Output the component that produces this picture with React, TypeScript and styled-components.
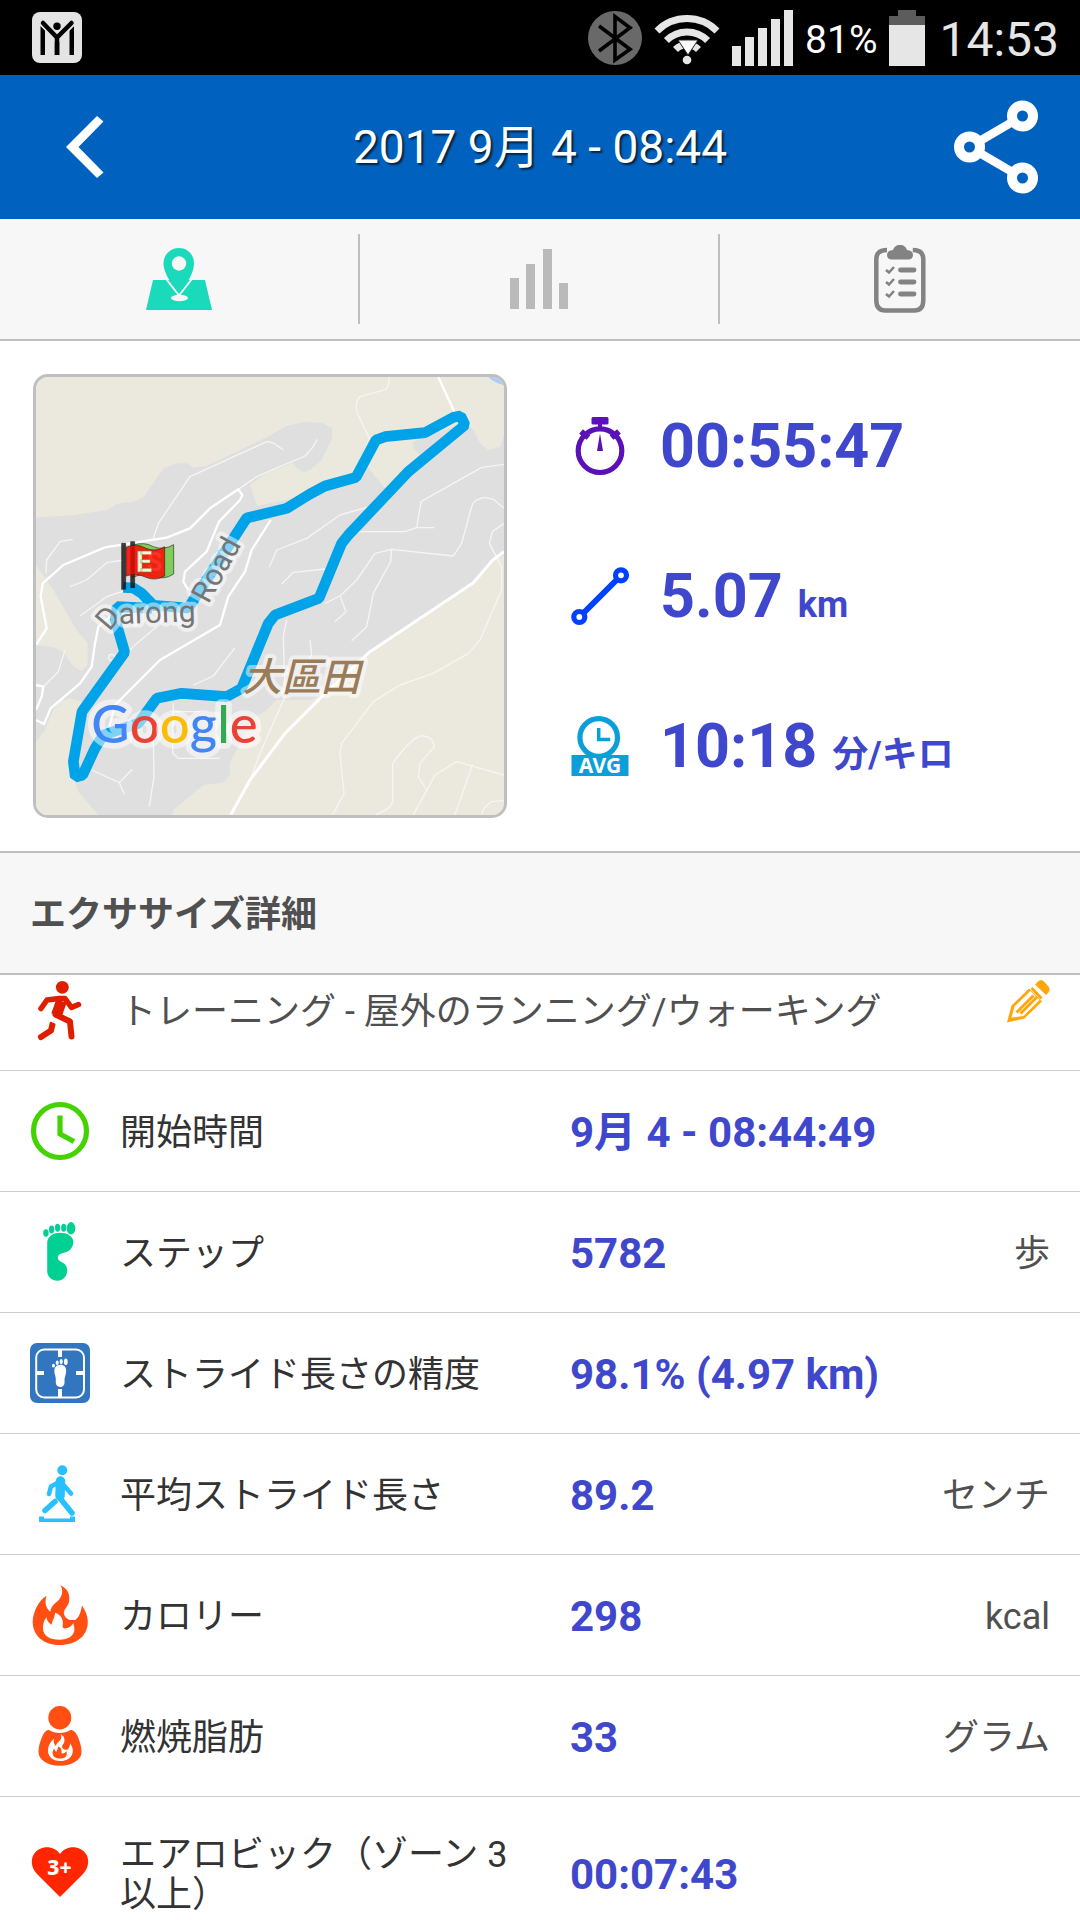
import React, { useLayoutEffect, useRef, useState } from "react";
import styled, { createGlobalStyle } from "styled-components";

const colors = {
  brand: "#0062be",
  bar: "#f7f7f7",
  line: "#bfbfbf",
  rowLine: "#cccccc",
  value: "#3f48cc",
  label: "#333333",
  muted: "#505050",
};

const GlobalStyle = createGlobalStyle`
  * { box-sizing: border-box; }
  body {
    margin: 0;
    background: #fff;
    font-family: Roboto, "Noto Sans CJK JP", sans-serif;
  }
  button {
    appearance: none;
    border: 0;
    padding: 0;
    background: none;
    font: inherit;
    color: inherit;
    cursor: pointer;
  }
  svg { display: block; }
`;

const Screen = styled.div`
  display: flex;
  flex-direction: column;
  height: 100vh;
  overflow: hidden;
`;

const StatusBar = styled.div`
  display: flex;
  align-items: center;
  justify-content: space-between;
  flex: none;
  height: 75px;
  padding: 0 21px 0 32px;
  background: #000;
`;

const StatusGroup = styled.div`
  display: flex;
  align-items: center;
  gap: 12px;
`;

const BatteryText = styled.span`
  padding-top: 4px;
  font-size: 39px;
  line-height: 48px;
  color: #fff;
`;

const Clock = styled.time`
  padding-top: 4px;
  font-size: 48px;
  line-height: 60px;
  color: #e6e6e6;
`;

const Header = styled.header`
  display: grid;
  grid-template-columns: 1fr auto 1fr;
  align-items: center;
  flex: none;
  height: 144px;
  padding: 0 42px 0 66px;
  background: ${colors.brand};
`;

const Title = styled.h1`
  margin: 0 0 0 -24px;
  font-size: 46px;
  line-height: 60px;
  font-weight: 400;
  color: #fff;
  text-shadow: 2px 2px 2px rgba(0, 0, 0, 0.65);
`;

const HeaderButton = styled.button<{ $end?: boolean }>`
  justify-self: ${(p) => (p.$end ? "end" : "start")};
`;

const Tabs = styled.nav`
  display: grid;
  grid-template-columns: repeat(3, 1fr);
  flex: none;
  padding: 15px 0;
  background: ${colors.bar};
  border-bottom: 2px solid ${colors.line};
`;

const Tab = styled.button`
  display: flex;
  align-items: center;
  justify-content: center;
  height: 90px;

  &:not(:last-child) {
    border-right: 2px solid ${colors.line};
  }
`;

const Summary = styled.section`
  display: grid;
  grid-template-columns: 474fr 477fr;
  gap: 63px;
  align-items: center;
  flex: none;
  padding: 33px;
`;

const MapFrame = styled.div`
  border: 3px solid ${colors.line};
  border-radius: 15px;
  overflow: hidden;
  background: #ebe9dd;

  svg {
    width: 100%;
    height: auto;
  }
`;

const Metrics = styled.div`
  display: flex;
  flex-direction: column;
  gap: 90px;
`;

const Metric = styled.div`
  display: flex;
  align-items: center;
  gap: 30px;
  height: 60px;
  font-weight: 700;
  color: ${colors.value};
  white-space: nowrap;
`;

const MetricText = styled.p`
  margin: 0;
  font-size: 61px;
  line-height: 60px;
`;

const MetricUnit = styled.span`
  font-size: 36px;
  line-height: 1px;
`;

const SectionTitle = styled.h2`
  flex: none;
  margin: 0;
  padding: 38px 30px 34px;
  font-size: 36px;
  line-height: 48px;
  font-weight: 700;
  color: ${colors.muted};
  background: ${colors.bar};
  border-top: 2px solid ${colors.line};
  border-bottom: 2px solid ${colors.line};
`;

const Details = styled.div`
  flex: 1;
  min-height: 0;
  overflow-y: auto;
  scrollbar-width: none;
`;

const List = styled.dl`
  margin: 0;
`;

const Activity = styled.div`
  display: flex;
  align-items: center;
  gap: 30px;
  height: 121px;
  padding: 0 30px;
  border-bottom: 1px solid ${colors.rowLine};
  font-size: 36px;
  line-height: 40px;
  color: ${colors.muted};
`;

const ActivityName = styled.span`
  flex: 1;
  padding-top: 4px;
`;

const EditButton = styled.button`
  align-self: flex-start;
  padding: 30px 0;
`;

const Row = styled.div`
  display: grid;
  grid-template-columns: 60px minmax(0, 7fr) minmax(0, 8fr);
  column-gap: 30px;
  align-items: center;
  min-height: 121px;
  padding: 34px 30px;
  border-bottom: 1px solid ${colors.rowLine};
  line-height: 40px;
`;

const IconSlot = styled.div`
  height: 48px;
  display: flex;
  align-items: center;
`;

const Label = styled.dt`
  padding-top: 4px;
  font-size: 36px;
  color: ${colors.label};
`;

const Reading = styled.dd`
  display: flex;
  align-items: center;
  justify-content: space-between;
  margin: 0;
  padding-top: 4px;
`;

const Value = styled.span`
  font-size: 42px;
  font-weight: 700;
  color: ${colors.value};
`;

const Unit = styled.span`
  font-size: 36px;
  color: ${colors.muted};
`;

const Icon = ({ children }: { children: React.ReactNode }) => (
  <svg width="60" height="60" viewBox="0 0 60 60" fill="none" overflow="visible" aria-hidden="true">
    {children}
  </svg>
);

const AppBadge = () => (
  <svg width="50" height="51" viewBox="0 0 50 51" aria-hidden="true">
    <rect width="50" height="51" rx="8" fill="#e4e4e4" />
    <path d="M8.500 14l4.500 4.500V43H8.500zM42 14l-4.500 4.500V43H42z" fill="#000" />
    <path d="M25 43V25M11 11l14 14.500L39.500 11" fill="none" stroke="#000" strokeWidth="4.500" strokeLinecap="round" />
    <path d="M22.800 30h4.500v13h-4.500z" fill="#000" />
    <circle cx="25" cy="14.300" r="3.700" fill="#000" />
    <path d="M8 13l9.500 9.500M42.500 13l-9.500 9.500" stroke="#e4e4e4" strokeWidth="1" />
    <path d="M22.800 43h4.500v4h-4.500z" fill="#e4e4e4" />
  </svg>
);

const Bluetooth = () => (
  <svg width="54" height="54" viewBox="0 0 54 54" aria-hidden="true">
    <circle cx="27" cy="27" r="27" fill="#696969" />
    <path d="M11 15l31 23.300L27 49V5.500l15 11.200L11 40" fill="none" stroke="#000" strokeWidth="3.600" />
  </svg>
);

const Wifi = () => (
  <svg width="66" height="54" viewBox="0 0 66 54" aria-hidden="true">
    <g fill="none" stroke="#e6e6e6" strokeWidth="7">
      <path d="M3 20a42.500 42.500 0 0 1 60 0" />
      <path d="M12.400 29.500a29 29 0 0 1 41.200 0" />
      <path d="M21.500 38.500a16.200 16.200 0 0 1 23 0" />
    </g>
    <path d="M24 29h20L34 44z" fill="#fff" stroke="#222" strokeWidth="1" />
    <circle cx="33" cy="49" r="4.300" fill="#e6e6e6" />
  </svg>
);

const Signal = () => (
  <svg width="61" height="56" viewBox="0 0 61 56" fill="#e6e6e6" aria-hidden="true">
    <path d="M0 36h9v20H0zM13 27h9v29h-9zM26 18h9v38h-9zM39 9h9v47h-9zM52 0h9v56h-9z" />
  </svg>
);

const Battery = () => (
  <svg width="38" height="56" viewBox="0 0 38 56" aria-hidden="true">
    <path d="M9 0h18v6h9v9H0V6h9z" fill="#5c5c5c" />
    <path d="M0 15h36v41H0z" fill="#e6e6e6" />
  </svg>
);

const BackArrow = () => (
  <svg width="38" height="62" viewBox="0 0 38 62" aria-hidden="true">
    <path d="M31 0l6.500 5.500L12.500 31l25 25.500L31 62 0 31z" fill="#fff" />
  </svg>
);

const Share = () => (
  <svg width="84" height="94" viewBox="0 0 84 94" fill="none" stroke="#fff" strokeWidth="10" aria-hidden="true">
    <path d="M15.500 47l53-31M15.500 47l53 31" strokeWidth="8.500" />
    <g fill={colors.brand}>
      <circle cx="68.500" cy="16" r="10.500" />
      <circle cx="15.500" cy="47" r="10.500" />
      <circle cx="68.500" cy="78" r="10.500" />
    </g>
  </svg>
);

const MapTabIcon = () => (
  <svg width="66" height="62" viewBox="0 0 66 62" aria-hidden="true">
    <path d="M7 32h52l7 30H0z" fill="#1adabb" />
    <ellipse cx="33.500" cy="50" rx="8.500" ry="3.300" fill={colors.bar} />
    <path
      d="M33 0C24 0 17.500 7 17.500 15.500 17.500 25 26 37 33 46c7-9 15-21 15-30.500C48 7 42 0 33 0z"
      fill="#1adabb"
    />
    <path d="M20.500 31.500l12.500 16 12.500-16" fill="none" stroke={colors.bar} strokeWidth="2" />
    <circle cx="33" cy="15.500" r="7.200" fill={colors.bar} />
  </svg>
);

const ChartTabIcon = () => (
  <svg width="58" height="60" viewBox="0 0 58 60" fill="#bababa" aria-hidden="true">
    <path d="M0 29h9v31H0zM16 15h9v45h-9zM33 0h9v60h-9zM49 34h9v26h-9z" />
  </svg>
);

const ClipboardTabIcon = () => (
  <svg width="52" height="68" viewBox="0 0 52 68" fill="none" stroke="#838383" aria-hidden="true">
    <path
      d="M13 5C6 5 2.300 8 2.300 14v41c0 7 3 10.500 9 10.500h29c6 0 9-3.500 9-10.500V14c0-6-3.500-9-10.500-9"
      strokeWidth="4.500"
    />
    <path
      d="M13 10c0-3 2-4.500 6-5 1-3 3-5 7-5s6 2 7 5c4 .5 6 2 6 5s-2 4.500-5 4.500H18c-3 0-5-1.500-5-4.500z"
      fill="#838383"
      stroke="none"
    />
    <path d="M26.500 25H40M26.500 37H40M26.500 49H40" strokeWidth="4.800" strokeLinecap="round" />
    <path d="M12 25l3 2.500 5-5.500M12 37l3 2.500 5-5.500M12 49l3 2.500 5-5.500" strokeWidth="2.600" />
  </svg>
);

const Stopwatch = () => (
  <Icon>
    <circle cx="30" cy="34.700" r="21.800" stroke="#5a12b8" strokeWidth="5.200" />
    <path d="M11 15.500l7.500 6M49 15.500l-7.500 6" stroke="#5a12b8" strokeWidth="6" />
    <path d="M23 1h14a1.500 1.500 0 0 1 1.500 1.500V7A1.500 1.500 0 0 1 37 8.500h-5V12h-4V8.500h-5A1.500 1.500 0 0 1 21.500 7V2.500A1.500 1.500 0 0 1 23 1z" fill="#5a12b8" />
    <path d="M30 17.500l3 17.500h-6z" fill="#5a12b8" />
  </Icon>
);

const Distance = () => (
  <Icon>
    <g stroke="#0040ff">
      <path d="M13 47.500l34-34" strokeWidth="6" />
      <circle cx="51" cy="9.300" r="5.500" strokeWidth="5.200" />
      <circle cx="9.300" cy="51" r="5.500" strokeWidth="5.200" />
    </g>
  </Icon>
);

const AveragePace = () => (
  <Icon>
    <circle cx="28.700" cy="21.500" r="18.800" stroke="#0a9fd9" strokeWidth="5.200" />
    <path d="M28.700 12v11.500h11.500" stroke="#0a9fd9" strokeWidth="3.500" />
    <path d="M1.500 39h57v21h-57z" fill="#0a9fd9" />
    <text x="30" y="56.500" textAnchor="middle" fontFamily="Noto Sans, sans-serif" fontWeight="700" fontSize="21" fill="#fff">
      AVG
    </text>
  </Icon>
);

const Runner = () => (
  <Icon>
    <circle cx="32.300" cy="7.300" r="6.400" fill="#df1e00" />
    <g stroke="#df1e00" strokeLinejoin="round" strokeLinecap="round">
      <path d="M11 28.500L17 20l12-1.500h6l6.500 9 7-3" strokeWidth="5.500" />
      <path d="M31.500 21l-5 14" strokeWidth="11" strokeLinecap="butt" />
      <path d="M25.500 34.500l14.500 7 1.500 15" strokeWidth="6" />
      <path d="M22.500 44l-1.500 6.500-10 6.500" strokeWidth="6" />
    </g>
    <path d="M18 39.500l9 4" stroke="#fff" strokeWidth="1.800" />
  </Icon>
);

const Pencil = () => (
  <svg width="43" height="43" viewBox="0 0 43 43" aria-hidden="true">
    <path d="M0 42.500l4.500-17L22 8.500l13 13-17.500 17z" fill="#ffa60a" />
    <path d="M4.500 37.500l3-11L23.500 11l9 9-16 16z" fill="#fff" />
    <path d="M9.500 32.500l17-17M13.500 33.500L30 17" stroke="#ffa60a" strokeWidth="2.900" />
    <path d="M24.500 8l10 10.500" stroke="#ffa60a" strokeWidth="3" />
    <path d="M28 4.500l3-3c2-2 4-2 6 0L41 6c2 2 2 4.500.5 6.500L39 15z" fill="#ffa60a" />
  </svg>
);

const StartClock = () => (
  <Icon>
    <circle cx="30" cy="30" r="26.500" stroke="#43d300" strokeWidth="5.200" />
    <path d="M30 14.500V33l14 7.500" stroke="#43d300" strokeWidth="5.200" />
  </Icon>
);

const Footprint = () => (
  <Icon>
    <g fill="#00d094">
      <path d="M30 10.700c-8 0-12.800 4.300-12.800 10.300v28c0 6 4.800 9.700 10.100 9.700 5.700 0 9.900-4.700 9.900-10.200 0-7.500-5.200-7.500-8.200-10-2.500-2.500-1.500-6.500 4-7.500 6-1 10.300-5 10.300-11s-6.300-9.300-13.300-9.300z" />
      <ellipse cx="15.900" cy="11" rx="2.700" ry="3.700" />
      <ellipse cx="21.600" cy="7.500" rx="2.600" ry="3.900" />
      <ellipse cx="27.600" cy="5.700" rx="2.600" ry="4" />
      <ellipse cx="33.700" cy="5.700" rx="2.600" ry="4" />
      <ellipse cx="41" cy="6.300" rx="4.300" ry="6.200" />
    </g>
  </Icon>
);

const StrideTarget = () => (
  <Icon>
    <rect width="60" height="60" rx="7" fill="#3176bf" />
    <rect x="6.200" y="6.500" width="47.800" height="48" rx="8" stroke="#fff" strokeWidth="2" />
    <path d="M30 6v8M30 54v-8M6 30h8M54 30h-8" stroke="#fff" strokeWidth="4" />
    <g fill="#fff">
      <path d="M30.300 21.700c-4 0-6 3-6 6 0 4 2 6 1.500 10-.4 4 1.500 6.200 4.300 6.200 3 0 4.800-2 4.400-6-.3-4 1.700-6 1.700-10s-2-6.200-5.900-6.200z" />
      <ellipse cx="23.500" cy="22.700" rx="1.500" ry="1.900" />
      <ellipse cx="27.200" cy="19.800" rx="1.500" ry="2.200" />
      <ellipse cx="31.200" cy="18.600" rx="1.600" ry="2.600" />
      <ellipse cx="35.800" cy="18.800" rx="1.900" ry="3.300" />
    </g>
  </Icon>
);

const Walker = () => (
  <Icon>
    <circle cx="32.300" cy="6.200" r="5" fill="#29c0ff" />
    <g stroke="#29c0ff" strokeLinejoin="round" strokeLinecap="round">
      <path d="M30 17.500l-9 5-2 7.500" strokeWidth="4.600" />
      <path d="M34 21.500l7 8" strokeWidth="4.600" />
      <path d="M30.500 17l-.5 15" strokeWidth="9.500" />
      <path d="M29 33l13 16" strokeWidth="5.600" />
      <path d="M25 37.500L15 46.500" strokeWidth="5.600" />
    </g>
    <path d="M9 52.500h5v2h26v-2h5V58H9z" fill="#29c0ff" />
  </Icon>
);

const FLAME =
  "M30.300.3C37 3 40.500 9 39 17c-1 5-6 7.500-5 12 1 3.500 4 6 7 6h4c4-2 6-8 7-14.700 4 7 5.800 11 5.800 16.700C57.800 51 46 60 29.600 60 13 60 2.700 50 2.700 36.700 2.700 27 9 15 16.500 10.700c-2 6-1 12 3.800 16C21 20 26.500 18 29.500 14c3.500-4.500 3.500-10 .8-13.700z M25 27.700c0 4-2 6.500-3.500 12-3-2-4.500-4-5.200-7.500-3 4-3.500 8-3.300 11.800C13.500 51 20 54.700 29.600 54.700c8 0 14-3.500 14.700-9.200.3-3-.3-5-1-7.500-1.500 3-4 5-8 5.500-2 0-3-1-2.600-3 1-6-1.700-11-7.700-12.800z";

const Flame = () => (
  <Icon>
    <path fillRule="evenodd" d={FLAME} fill="#ff4f12" />
  </Icon>
);

const FatBurn = () => (
  <Icon>
    <ellipse cx="29.800" cy="11.700" rx="11.500" ry="11.700" fill="#ff4f12" />
    <path
      d="M19 24c6 4 15.500 4 21.500 0 3 0 5 2 6.500 5 2.500 5 4.500 11 4.500 17 0 8-9.500 13.700-21.700 13.700S8.500 54 8.500 46c0-6 2-12 4.500-17 1.500-3 3-5 6-5z"
      fill="#ff4f12"
    />
    <g transform="translate(16.800 28) scale(.45)">
      <path fillRule="evenodd" d={FLAME} fill="#fff" />
    </g>
  </Icon>
);

const HeartZone = () => (
  <Icon>
    <path
      d="M30 54L7 31C1 25 .5 16 4 11c5.500-8.500 19.500-9.500 26 0 6.500-9.500 20.500-8.500 26 0 3.500 5 3 14-3 20z"
      fill="#ff2600"
    />
    <text x="29.500" y="32" textAnchor="middle" fontFamily="Noto Sans, sans-serif" fontWeight="800" fontSize="21" fill="#fff">
      3+
    </text>
  </Icon>
);

const HALO = {
  stroke: "#fff",
  strokeOpacity: 0.5,
  strokeWidth: 24,
  strokeLinejoin: "round" as const,
  paintOrder: "stroke",
};

const WORDMARK: [string, string][] = [
  ["G", "#4285f4"],
  ["o", "#ea4335"],
  ["o", "#fbbc05"],
  ["g", "#4285f4"],
  ["l", "#34a853"],
  ["e", "#ea4335"],
];

const RouteMap = () => (
  <svg viewBox="48 51 1404 1314" fill="none" role="img" aria-label="Route map">
    <path fill="#ebe9dd" d="M48 51h1404v1314H48z" />
    <polygon
      fill="#dfdfdf"
      points="48,472 160,466 260,450 290,432 345,424 370,412 400,370 430,325 470,310 500,310 520,322 560,318 640,280 740,232 800,198 850,186 905,188 937,205 935,240 905,300 870,330 850,337 830,325 820,308 730,345 690,375 712,437 800,420 870,400 1000,345 1040,318 1095,385 1200,285 1180,265 1180,245 1300,200 1345,195 1360,210 1380,250 1405,270 1440,260 1452,225 1452,585 1420,600 1360,670 1050,870 900,1010 870,1020 770,1020 740,1050 700,1075 680,1110 650,1170 628,1210 630,1245 610,1268 550,1275 490,1325 460,1350 458,1365 48,1365"
    />
    <polygon fill="#ebe9dd" points="48,615 100,690 170,810 203,850 203,915 185,933 155,915 130,875 100,862 48,855" />
    <polygon
      fill="#ebe9dd"
      points="48,1145 72,1115 100,1050 120,1022 150,1015 195,1030 160,1200 165,1260 175,1295 235,1365 48,1365"
    />
    <path fill="#aecbfa" d="M1405 51h47v25q-30-8-47-25z" />
    <g stroke="#f5f5f3" strokeWidth="4" strokeLinejoin="round">
      <path d="M1108 51q0 30-12 38l-76 21q-18 15-8 50l38 80" />
      <path d="M400 535l15-45 95-140 230-105 20 4 30 21" />
      <path d="M655 388l55-38 145-62 20-22 17-28" />
      <path d="M748 622l22-52 90-35 100-70 80-23" />
      <path d="M1000 515h155l35-12h53M1190 503l13-78 182-103 67-9" />
      <path d="M1452 445l-32-27-25-6q-35 5-40 28l-30 110-25 38-185-20-50 12-55 80-50 48-45 22" />
      <path d="M1115 568l-3 37-52 95-20 100-45 42M960 708l18 47-33 30M785 672l35-35 95-10" />
      <path d="M1452 490l-35 25-9 35 37 70v70l-65 150-35 40-105 60-100 35-80 50-95 125-5 30 12 120-34 65" />
      <path d="M800 780l-10 50 5 180-75 170-30 80M645 863l-65 85-60 27M870 840l5 45-20 30" />
      <path d="M78 640l2-40 40-55 38-7M150 680l50-20 60-52 50-8M180 768l80-58 60-20M410 800l-65 55-35 35" />
      <path d="M400 1140l2 110-14 90M460 1030l-2 150 17 15h125M460 1055h80" />
      <path d="M215 1230l83 38 39-40M298 1268l15 35M135 870l-20 65-45 45" />
      <path d="M1220 1290l-25-40 5-40 43-50q-5-35-43-32-30 10-82 82v110q0 25-53 45" />
      <path d="M1180 1365l65-120 65-40 142 40M1358 1213l-53 152M1385 1365q0-20 30-40l37-3" />
      <circle cx="275" cy="892" r="9" />
    </g>
    <g stroke="#fff" strokeWidth="7" strokeLinejoin="round">
      <path d="M48 855l32-50-18-95 6-40 62-55 125-53 75-12 110-17 70-28 60-60 85-57 12 17-7 15-63 65-37 90-65 60-5 30 15 25" />
      <path d="M752 480l-57 90-20 65-50 75-25 85-180 105-135 135-20 75" />
      <path d="M48 975l22 5-5 30-17 40M48 1080l24 12 20-47 88-75 35-50 10-70 10-50 35-30" />
      <path d="M1255 51l50 109" />
      <path d="M1452 575l-34 25-58 68-310 207-150 140-105 105-105 140-58 105" strokeWidth="9" />
    </g>
    <path
      d="M310 682l30 2 25 16 35 36 105 8 175-270 120-29 70-43 45-24 93-26 60-112 27-10 120-12 85-46 22-4 13 27-170 140-180 190-20 25-68 165-132 50-20 25-80 195-45 25-135-10-75 15-55 75-105 35-25 40-37 80-22 6-6-46 26-150 128-178-28-97 5-40 105 5"
      stroke="#00a2e8"
      strokeWidth="32"
      strokeLinejoin="bevel"
    />
    <path id="darong" d="M268 816l38-45M297 792l240-8" />
    <g fontFamily="Roboto, sans-serif" fontSize="90" fill="#757575" {...HALO}>
      <text>
        <textPath href="#darong">Darong</textPath>
      </text>
      <text transform="translate(565 734) rotate(-61)">Road</text>
    </g>
    <text
      x="668"
      y="992"
      fontFamily="Noto Sans CJK TC, sans-serif"
      fontSize="117"
      fontWeight="500"
      fontStyle="italic"
      fill="#9b7c58"
      {...HALO}
    >
      大區田
    </text>
    <g fill="#000" fillOpacity="0.75" stroke="#222" strokeWidth="3" strokeOpacity="0.6">
      <path d="M338 556q35-12 62 4 30 12 61-6v88q-30 20-61 6-30-10-62 4z" fill="#7fce5b" fillOpacity="1" />
      <path d="M305 550h12v138h-12zM332 545h12v138h-12z" />
      <path d="M318 562q32-14 60 3 28 12 56-5v88q-28 16-56 4-28-14-60-4z" fill="#f5140a" fillOpacity="0.93" />
    </g>
    <path d="M338 560v90" stroke="#a80b0b" strokeOpacity="0.5" strokeWidth="12" />
    <g fontFamily="Roboto, sans-serif" fontWeight="700" fontSize="86">
      <text x="380" y="632" fill="#ff3028" fontSize="76">S</text>
      <text x="348" y="636" fill="#f6f3dc" stroke="#5a7a20" strokeWidth="1">E</text>
    </g>
    <text x="214" y="1148" fontFamily="Lato, sans-serif" fontSize="158" fontWeight="500" {...HALO} strokeWidth="34">
      {WORDMARK.map(([letter, fill], i) => (
        <tspan key={i} fill={fill}>
          {letter}
        </tspan>
      ))}
    </text>
  </svg>
);

const metrics = [
  { icon: <Stopwatch />, value: "00:55:47", unit: "" },
  { icon: <Distance />, value: "5.07", unit: "km" },
  { icon: <AveragePace />, value: "10:18", unit: "分/キロ" },
];

const details = [
  { icon: <StartClock />, label: "開始時間", value: "9月 4 - 08:44:49", unit: "" },
  { icon: <Footprint />, label: "ステップ", value: "5782", unit: "歩" },
  { icon: <StrideTarget />, label: "ストライド長さの精度", value: "98.1% (4.97 km)", unit: "" },
  { icon: <Walker />, label: "平均ストライド長さ", value: "89.2", unit: "センチ" },
  { icon: <Flame />, label: "カロリー", value: "298", unit: "kcal" },
  { icon: <FatBurn />, label: "燃焼脂肪", value: "33", unit: "グラム" },
  { icon: <HeartZone />, label: "エアロビック（ゾーン 3以上）", value: "00:07:43", unit: "" },
];

const tabs = [
  { name: "Map", icon: <MapTabIcon /> },
  { name: "Charts", icon: <ChartTabIcon /> },
  { name: "Log", icon: <ClipboardTabIcon /> },
];

const INITIAL_SCROLL = 25;

export default function App() {
  const [activeTab, setActiveTab] = useState("Map");
  const listRef = useRef<HTMLDivElement>(null);

  useLayoutEffect(() => {
    if (listRef.current) listRef.current.scrollTop = INITIAL_SCROLL;
  }, []);

  return (
    <Screen lang="ja">
      <GlobalStyle />
      <StatusBar>
        <AppBadge />
        <StatusGroup>
          <Bluetooth />
          <Wifi />
          <Signal />
          <BatteryText>81%</BatteryText>
          <Battery />
          <Clock>14:53</Clock>
        </StatusGroup>
      </StatusBar>

      <Header>
        <HeaderButton aria-label="Back">
          <BackArrow />
        </HeaderButton>
        <Title>2017 9月 4 - 08:44</Title>
        <HeaderButton $end aria-label="Share">
          <Share />
        </HeaderButton>
      </Header>

      <Tabs>
        {tabs.map((tab) => (
          <Tab
            key={tab.name}
            aria-label={tab.name}
            aria-pressed={tab.name === activeTab}
            onClick={() => setActiveTab(tab.name)}
          >
            {tab.icon}
          </Tab>
        ))}
      </Tabs>

      <Summary>
        <MapFrame>
          <RouteMap />
        </MapFrame>
        <Metrics>
          {metrics.map((metric) => (
            <Metric key={metric.value}>
              {metric.icon}
              <MetricText>
                {metric.value} {metric.unit && <MetricUnit>{metric.unit}</MetricUnit>}
              </MetricText>
            </Metric>
          ))}
        </Metrics>
      </Summary>

      <SectionTitle>エクササイズ詳細</SectionTitle>

      <Details ref={listRef}>
        <Activity>
          <Runner />
          <ActivityName>トレーニング - 屋外のランニング/ウォーキング</ActivityName>
          <EditButton aria-label="Edit">
            <Pencil />
          </EditButton>
        </Activity>
        <List>
          {details.map((row) => (
            <Row key={row.label}>
              <IconSlot>{row.icon}</IconSlot>
              <Label>{row.label}</Label>
              <Reading>
                <Value>{row.value}</Value>
                {row.unit && <Unit>{row.unit}</Unit>}
              </Reading>
            </Row>
          ))}
        </List>
      </Details>
    </Screen>
  );
}
